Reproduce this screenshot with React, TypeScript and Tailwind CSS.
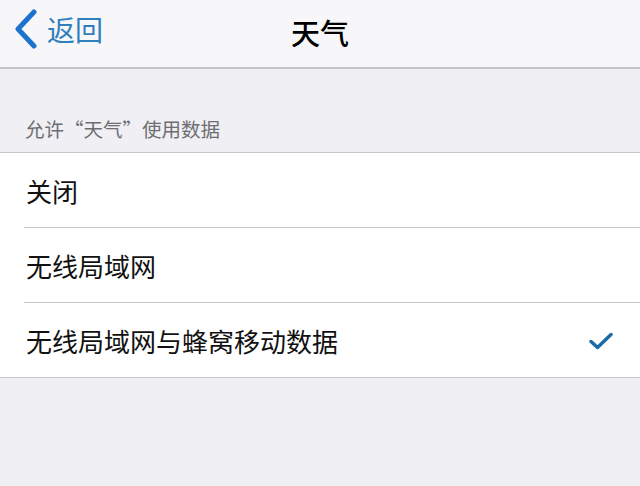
import React from "react";

const font = { fontFamily: '"Noto Sans CJK SC", "Noto Sans", sans-serif' };

function Row({ label, checked, last }: { label: string; checked?: boolean; last?: boolean }) {
  return (
    <div className={last ? "" : "pl-[24px]"}>
      <div
        className={
          "flex items-center h-[75px] border-b border-[#c8c8cc] " + (last ? "pl-[26px]" : "pl-[2px]")
        }
      >
        <span className="text-[26px] leading-none text-[#111] flex-1 mt-[2px]">{label}</span>
        {checked && (
          <svg width="24" height="18" viewBox="0 0 24 18" className="mr-[27px] mt-[2px]">
            <path d="M2 9.5 L8.5 15.5 L22 2.5" fill="none" stroke="#1b6aa8" strokeWidth="3.4" strokeLinecap="round" strokeLinejoin="round" />
          </svg>
        )}
      </div>
    </div>
  );
}

export default function App() {
  return (
    <div className="w-[640px] h-[486px] bg-[#efeff4] overflow-hidden" style={font}>
      <div className="relative h-[69px] bg-[#f7f7f9] border-b-2 border-[#c4c4c8] flex items-center justify-center">
        <div className="absolute left-[13px] top-[9px] flex items-center">
          <svg width="26" height="40" viewBox="0 0 26 40">
            <path d="M21 3 L5 20 L21 37" fill="none" stroke="#1c73cf" strokeWidth="5" strokeLinecap="round" strokeLinejoin="round" />
          </svg>
          <span className="ml-[8px] text-[28px] leading-none text-[#2f7fbf]">返回</span>
        </div>
        <span className="text-[29px] font-medium leading-none text-black -mt-[3px]">天气</span>
      </div>
      <div className="pt-[48px] pb-[11px] px-[25px] text-[19.5px] leading-[24px] text-[#6d6d72]">
        允许“天气”使用数据
      </div>
      <div className="bg-white border-t border-[#c8c8cc]">
        <Row label="关闭" />
        <Row label="无线局域网" />
        <Row label="无线局域网与蜂窝移动数据" checked last />
      </div>
    </div>
  );
}
